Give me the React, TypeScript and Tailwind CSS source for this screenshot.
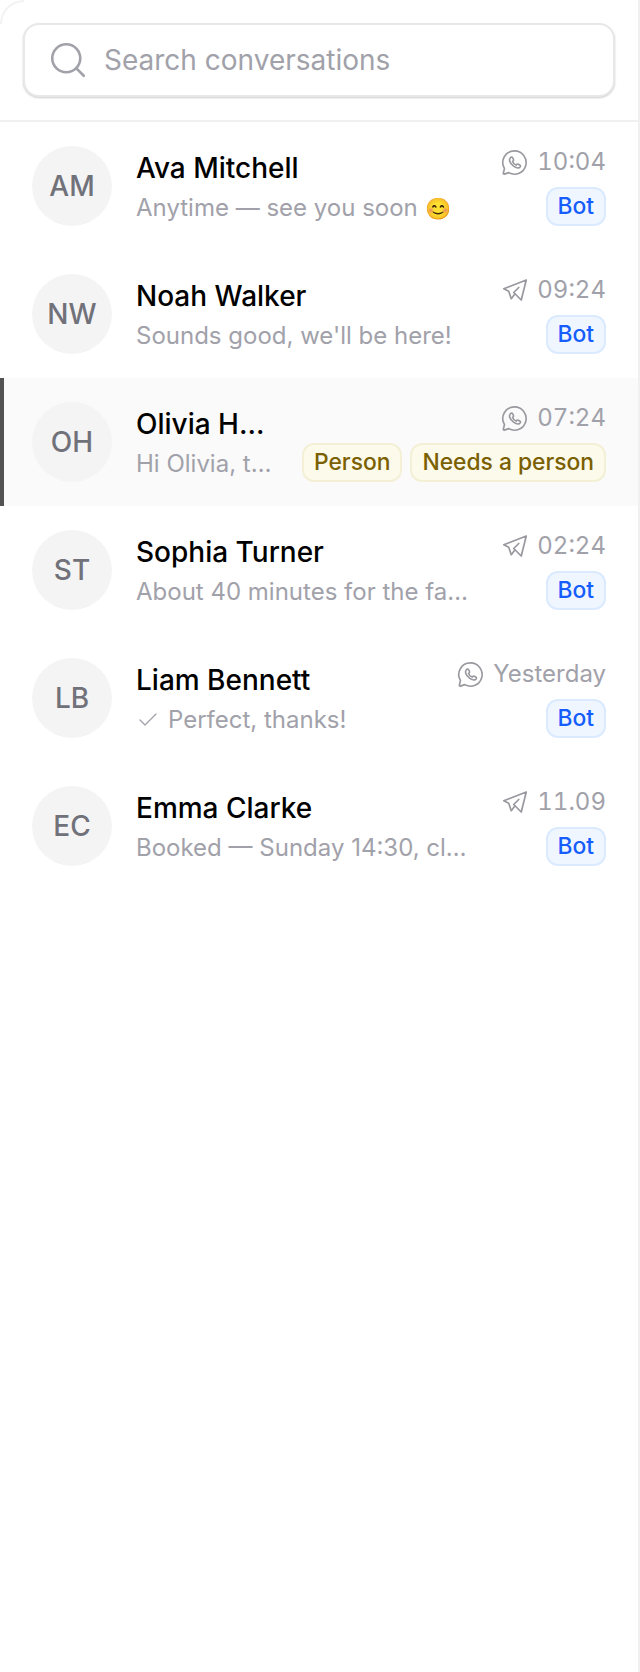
import { Search, Check } from "lucide-react";
import { TbBrandTelegram } from "react-icons/tb";

interface Conversation {
  initials: string;
  name: string;
  preview: string;
  emoji?: string;
  time: string;
  channel: "whatsapp" | "telegram";
  tags: string[];
  active?: boolean;
  sent?: boolean;
}

const conversations: Conversation[] = [
  { initials: "AM", name: "Ava Mitchell", preview: "Anytime — see you soon", emoji: "😊", time: "10:04", channel: "whatsapp", tags: ["Bot"] },
  { initials: "NW", name: "Noah Walker", preview: "Sounds good, we'll be here!", time: "09:24", channel: "telegram", tags: ["Bot"] },
  { initials: "OH", name: "Olivia Harper", preview: "Hi Olivia, thanks for waiting", time: "07:24", channel: "whatsapp", tags: ["Person", "Needs a person"], active: true },
  { initials: "ST", name: "Sophia Turner", preview: "About 40 minutes for the famous pasta", time: "02:24", channel: "telegram", tags: ["Bot"] },
  { initials: "LB", name: "Liam Bennett", preview: "Perfect, thanks!", time: "Yesterday", channel: "whatsapp", tags: ["Bot"], sent: true },
  { initials: "EC", name: "Emma Clarke", preview: "Booked — Sunday 14:30, close to the window", time: "11.09", channel: "telegram", tags: ["Bot"] },
];

const WhatsappIcon = () => (
  <svg width="31" height="31" viewBox="0 0 24 24" fill="none" stroke="currentColor" strokeWidth="1.25" strokeLinejoin="round" strokeLinecap="round">
    <path d="M12 3a9 9 0 1 1-4.4 16.85L4.1 21a.6.6 0 0 1-.75-.72l.9-3.6A9 9 0 0 1 12 3z" />
    <path d="M8.6 8.6c.5-.9 1.5-1 1.9-.3l.7 1.3c.2.4.1.8-.2 1.1l-.5.5c.5 1.3 1.5 2.3 2.8 2.8l.5-.5c.3-.3.7-.4 1.1-.2l1.3.7c.7.4.6 1.4-.3 1.9-1 .6-2.5.4-4.4-.9-1.6-1.1-2.8-2.5-3.2-4-.3-1-.1-1.8.3-2.4z" />
  </svg>
);

const Row = ({ c }: { c: Conversation }) => {
  return (
    <div className={`flex h-[128px] items-center gap-[24px] pr-[32px] ${c.active ? "border-l-4 border-[#525252] bg-[#fafafa] pl-[28px]" : "pl-[32px]"}`}>
      <div className="flex h-[80px] w-[80px] shrink-0 items-center justify-center rounded-full bg-[#f4f4f5] text-[28px] font-medium text-[#71717a]">
        {c.initials}
      </div>
      <div className="flex min-w-0 flex-1 items-center gap-6">
        <div className="min-w-0 flex-1 pt-[1px]">
          <div className="truncate text-[28px] leading-[42px] font-medium text-black">{c.name}</div>
          <div className="mt-[1px] flex items-center gap-2 text-[24px] leading-[36px] text-[#a1a1aa]">
            {c.sent && <Check size={24} strokeWidth={1.25} className="shrink-0" />}
            <span className="truncate">
              {c.preview}
              {c.emoji && <span className="ml-[7px] text-[21px]">{c.emoji}</span>}
            </span>
          </div>
        </div>
        <div className="mb-[2px] flex shrink-0 flex-col items-end gap-[7px]">
          <div className="flex items-center gap-[7px] text-[24px] leading-[36px] tabular-nums text-[#a1a1aa]">
            <span className="text-[#98989f]">
              {c.channel === "whatsapp" ? <WhatsappIcon /> : <TbBrandTelegram size={30} strokeWidth={1.35} />}
            </span>
            {c.time}
          </div>
          <div className="flex gap-[8px]">
            {c.tags.map((t) => (
              <span
                key={t}
                className={`flex h-[39px] items-center rounded-[12px] border-2 px-[10px] text-[22.8px] font-medium ${t === "Bot" ? "border-[#dbeafe] bg-[#eff6ff] text-[#155dfc]" : "border-[#f3f0d6] bg-[#fcfaea] text-[#7a6000]"}`}
              >
                {t}
              </span>
            ))}
          </div>
        </div>
      </div>
    </div>
  );
};

export default function App() {
  return (
    <div className="relative h-[1672px] w-[640px] border-r-2 border-[#f0f0f0] bg-white font-['Inter',sans-serif]">
      <div className="absolute top-0 left-0 h-[24px] w-[24px] rounded-tl-[24px] border-t-2 border-l-2 border-[#f3f3f3]" />
      <div className="border-b-2 border-[#f0f0f0] px-[23px] pt-[23px] pb-[23px]">
        <div className="flex h-[74px] items-center gap-[15px] rounded-[16px] border-2 border-[#e8e8e8] bg-white px-[22px] shadow-[0_1px_2px_rgba(0,0,0,0.2)]">
          <Search size={42} strokeWidth={1.5} className="shrink-0 text-[#a1a1aa]" />
          <input
            placeholder="Search conversations"
            className="min-w-0 flex-1 bg-transparent text-[28px] outline-none placeholder:text-[#a1a1aa]"
          />
        </div>
      </div>
      {conversations.map((c) => (
        <Row key={c.initials} c={c} />
      ))}
    </div>
  );
}
